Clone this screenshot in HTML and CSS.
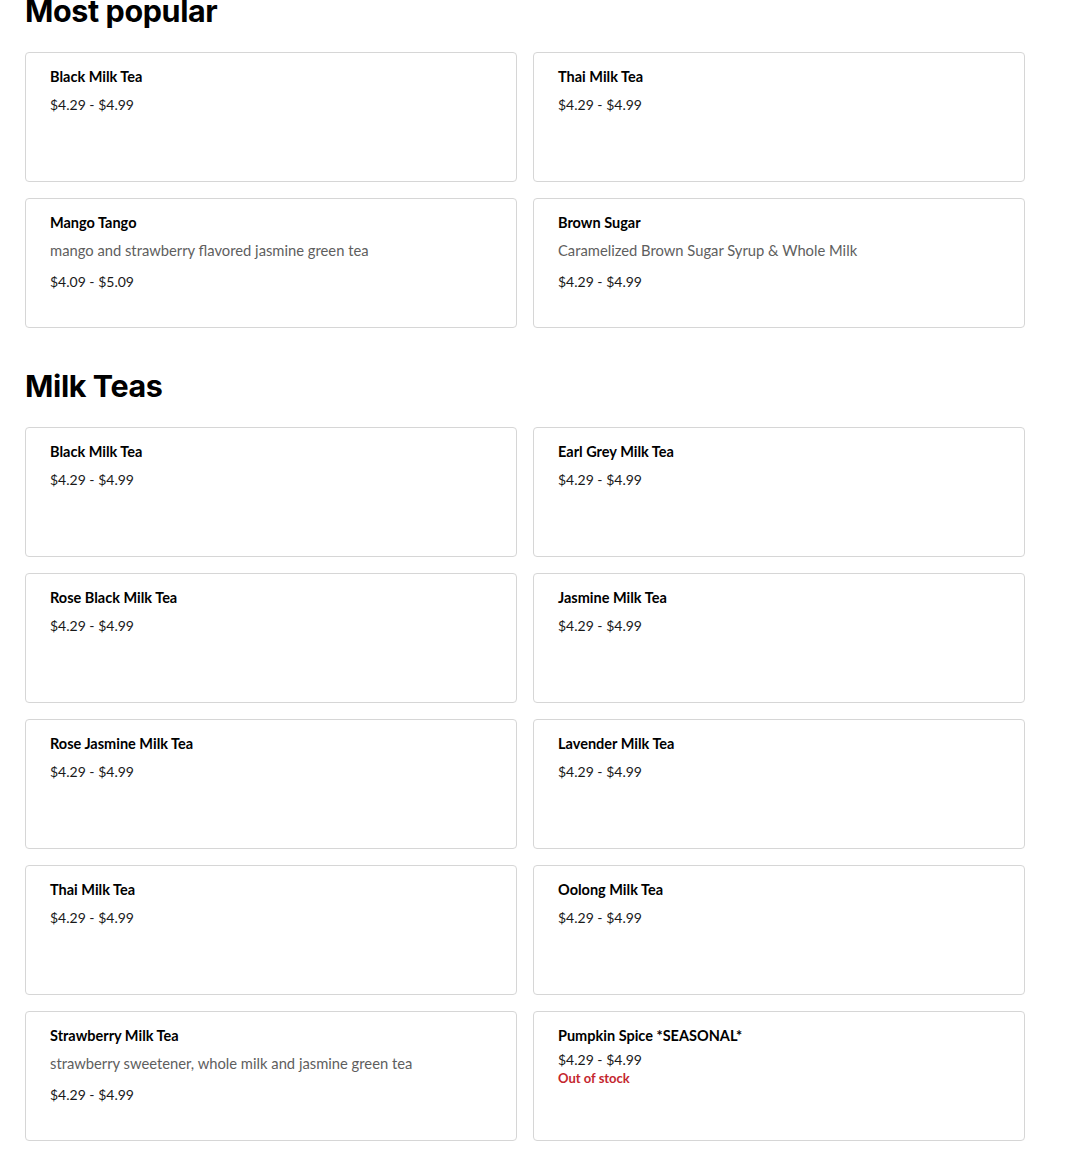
FILE: index.html
```html
<!DOCTYPE html>
<html>
<head>
<meta charset="utf-8">
<link rel="stylesheet" href="styles.css">
</head>
<body>
<div class="page">
  <section class="section first">
    <h2 class="section-title">Most popular</h2>
    <div class="grid">
      <div class="card"><div class="name">Black Milk Tea</div><div class="price">$4.29 - $4.99</div></div>
      <div class="card"><div class="name">Thai Milk Tea</div><div class="price">$4.29 - $4.99</div></div>
      <div class="card"><div class="name">Mango Tango</div><div class="desc">mango and strawberry flavored jasmine green tea</div><div class="price after-desc">$4.09 - $5.09</div></div>
      <div class="card"><div class="name">Brown Sugar</div><div class="desc">Caramelized Brown Sugar Syrup &amp; Whole Milk</div><div class="price after-desc">$4.29 - $4.99</div></div>
    </div>
  </section>
  <section class="section">
    <h2 class="section-title">Milk Teas</h2>
    <div class="grid">
      <div class="card"><div class="name">Black Milk Tea</div><div class="price">$4.29 - $4.99</div></div>
      <div class="card"><div class="name">Earl Grey Milk Tea</div><div class="price">$4.29 - $4.99</div></div>
      <div class="card"><div class="name">Rose Black Milk Tea</div><div class="price">$4.29 - $4.99</div></div>
      <div class="card"><div class="name">Jasmine Milk Tea</div><div class="price">$4.29 - $4.99</div></div>
      <div class="card"><div class="name">Rose Jasmine Milk Tea</div><div class="price">$4.29 - $4.99</div></div>
      <div class="card"><div class="name">Lavender Milk Tea</div><div class="price">$4.29 - $4.99</div></div>
      <div class="card"><div class="name">Thai Milk Tea</div><div class="price">$4.29 - $4.99</div></div>
      <div class="card"><div class="name">Oolong Milk Tea</div><div class="price">$4.29 - $4.99</div></div>
      <div class="card"><div class="name">Strawberry Milk Tea</div><div class="desc">strawberry sweetener, whole milk and jasmine green tea</div><div class="price after-desc">$4.29 - $4.99</div></div>
      <div class="card"><div class="name">Pumpkin Spice *SEASONAL*</div><div class="price tight">$4.29 - $4.99</div><div class="stock">Out of stock</div></div>
    </div>
  </section>
</div>
</body>
</html>
```

FILE: styles.css
```css
* { box-sizing: border-box; }
html, body { margin: 0; padding: 0; background: #fff; }
body { font-family: Lato, "Noto Sans", sans-serif; color: #191919; }
.page { padding: 0 45px 0 25px; margin-top: -9px; }
.section-title {
  margin: 0;
  font-family: Inter, "Noto Sans", sans-serif;
  font-size: 30.5px;
  line-height: 40px;
  font-weight: 700;
  letter-spacing: -0.4px;
  color: #000;
}
.section { margin-bottom: 38px; }
.section .section-title { margin-bottom: 21px; }
.grid {
  display: grid;
  grid-template-columns: 492px 492px;
  gap: 16px;
}
.card {
  height: 130px;
  border: 1px solid #d6d6d6;
  border-radius: 4px;
  padding: 14px 24px;
}
.name {
  font-size: 14.5px;
  line-height: 20px;
  font-weight: 700;
  color: #000;
}
.desc {
  margin-top: 7px;
  font-size: 14.75px;
  line-height: 20px;
  color: #5e5e5e;
}
.price {
  margin-top: 8px;
  font-size: 14px;
  line-height: 20px;
  color: #191919;
}
.price.after-desc { margin-top: 12px; }
.price.tight { margin-top: 4px; }
.stock {
  font-size: 13px;
  line-height: 16px;
  font-weight: 700;
  color: #c4262e;
}
```
